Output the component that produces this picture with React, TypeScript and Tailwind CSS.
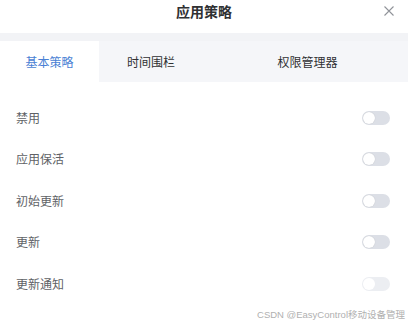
import React from "react";

const rows = [
  { label: "禁用", disabled: false },
  { label: "应用保活", disabled: false },
  { label: "初始更新", disabled: false },
  { label: "更新", disabled: false },
  { label: "更新通知", disabled: true },
];

function Toggle({ disabled }: { disabled: boolean }) {
  return (
    <div
      className={`relative w-[28px] h-[14px] rounded-full ${disabled ? "bg-[#eceef2]" : "bg-[#dcdfe6]"}`}
    >
      <div
        className={`absolute left-[1px] top-[1px] w-[12px] h-[12px] rounded-full bg-white ${disabled ? "" : "shadow-[0_0_1px_rgba(0,0,0,0.2)]"}`}
      />
    </div>
  );
}

export default function App() {
  return (
    <div
      className="w-[408px] h-[326px] bg-white relative overflow-hidden"
      style={{ fontFamily: '"Noto Sans CJK SC", "Noto Sans", sans-serif' }}
    >
      <div className="h-[33px] flex items-center justify-center relative">
        <span className="text-[14px] font-bold text-[#303133] leading-none -mt-[11px]">应用策略</span>
        <svg className="absolute right-[13px] top-[5px]" width="12" height="12" viewBox="0 0 12 12">
          <path d="M1.5 1.5 L10.5 10.5 M10.5 1.5 L1.5 10.5" stroke="#909399" strokeWidth="1.1" />
        </svg>
      </div>
      <div className="bg-[#f2f3f6] pt-[8px]">
        <div className="flex h-[41px] bg-[#f5f6f9] text-[12px]">
          <div className="w-[99px] bg-white flex items-center justify-center text-[#4a7fd4]">基本策略</div>
          <div className="w-[104px] flex items-center justify-center text-[#303133]">时间围栏</div>
          <div className="flex-1 flex items-center justify-center text-[#303133] pl-[4px]">权限管理器</div>
        </div>
      </div>
      <div className="pt-[15px] px-[16px] pr-[18px]">
        {rows.map((r) => (
          <div key={r.label} className="h-[41.5px] flex items-center justify-between">
            <span className="text-[12px] text-[#606266]">{r.label}</span>
            <Toggle disabled={r.disabled} />
          </div>
        ))}
      </div>
      <div
        className="absolute right-[3px] bottom-[7px] text-[9.5px] text-[#b0b0b0] leading-none"
        style={{ fontFamily: '"Liberation Sans", "Noto Sans CJK SC", sans-serif' }}
      >
        CSDN @EasyControl移动设备管理
      </div>
    </div>
  );
}
